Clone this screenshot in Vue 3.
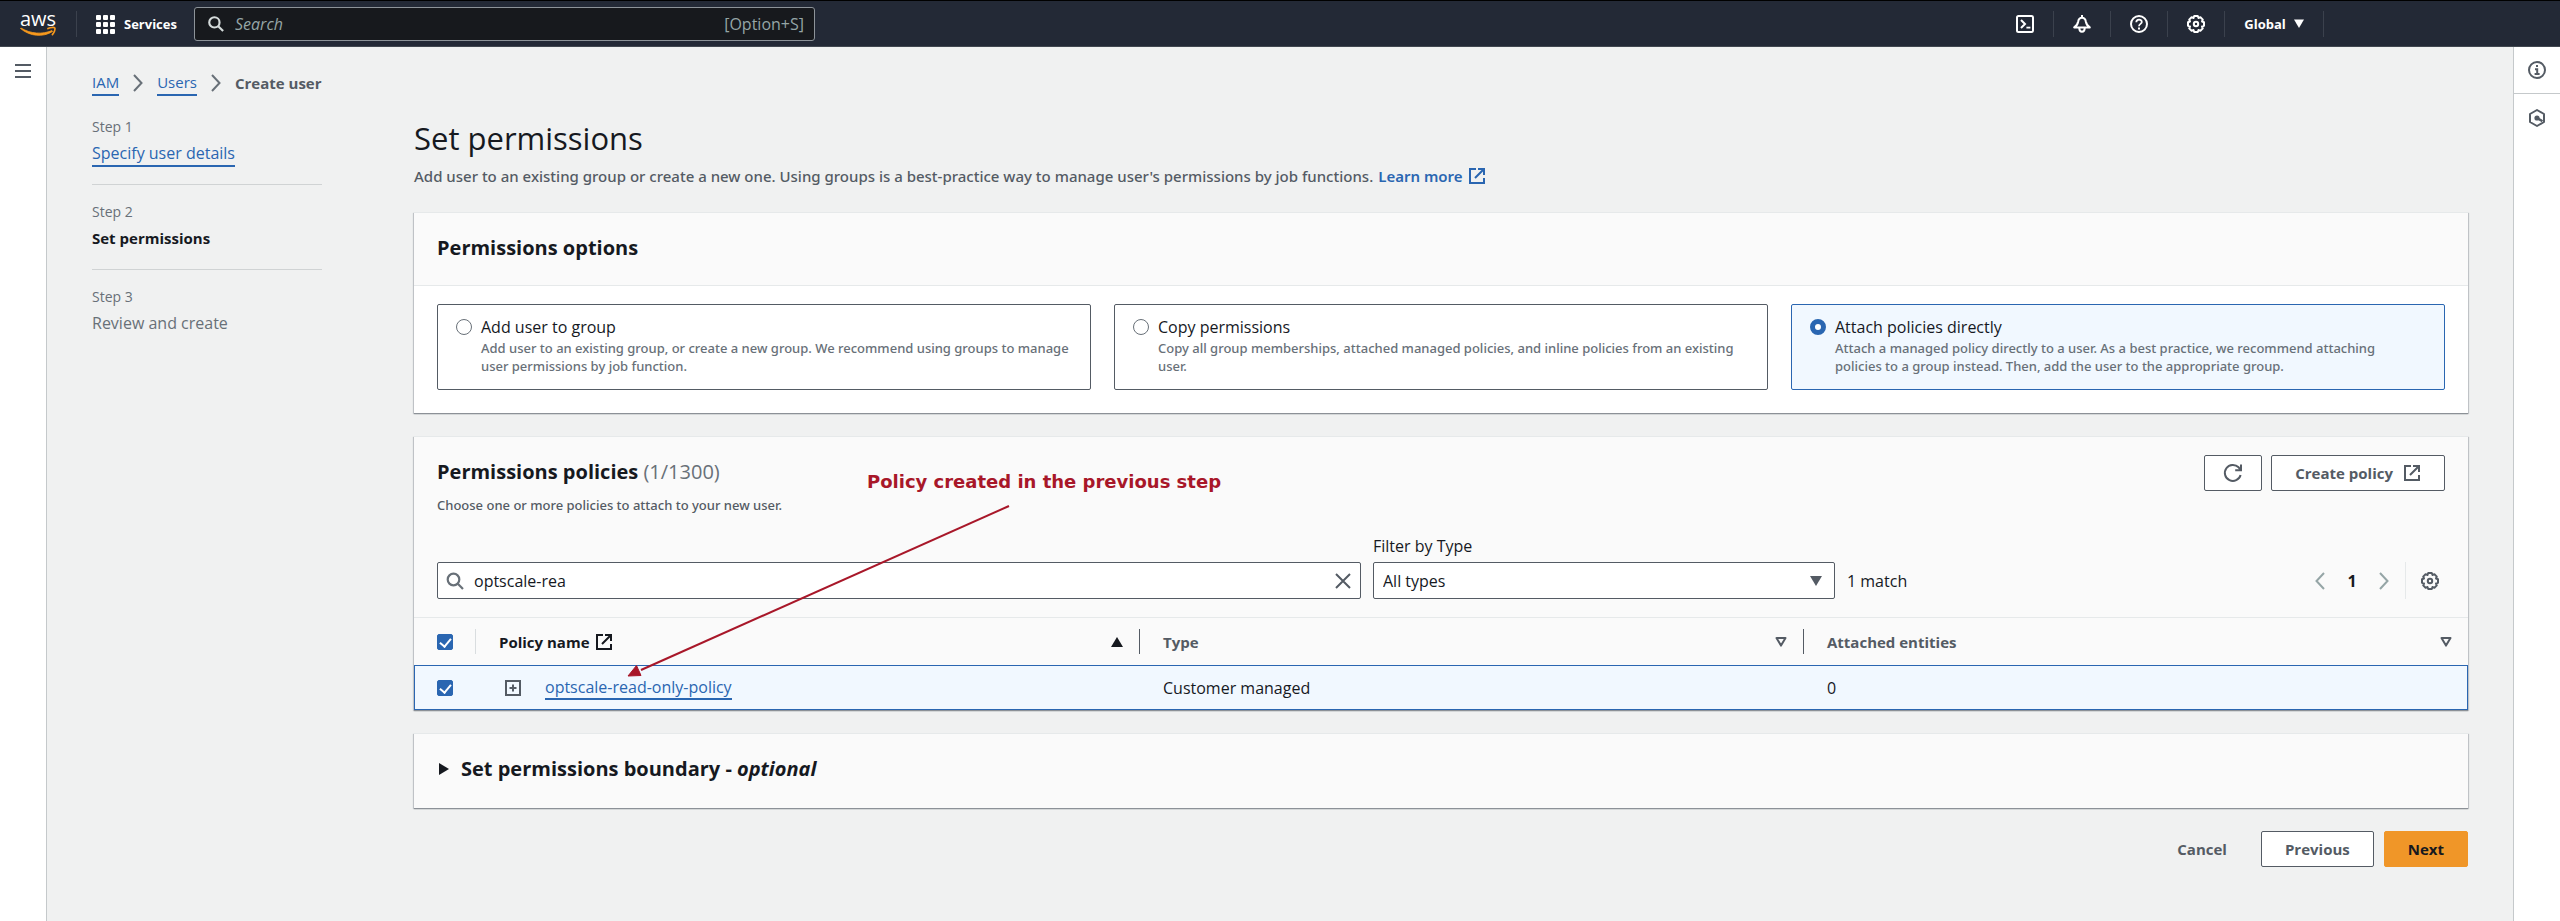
<script setup>
import { ref } from 'vue'

const search = ref('optscale-rea')
const filterType = ref('All types')
const selectedOption = ref('attach')
const allChecked = ref(true)
const rowChecked = ref(true)

const options = [
  {
    id: 'group',
    title: 'Add user to group',
    text: 'Add user to an existing group, or create a new group. We recommend using groups to manage user permissions by job function.',
  },
  {
    id: 'copy',
    title: 'Copy permissions',
    text: 'Copy all group memberships, attached managed policies, and inline policies from an existing user.',
  },
  {
    id: 'attach',
    title: 'Attach policies directly',
    text: 'Attach a managed policy directly to a user. As a best practice, we recommend attaching\npolicies to a group instead. Then, add the user to the appropriate group.',
  },
]
</script>

<template>
  <div class="app">
    <header class="topbar">
      <a class="logo" href="#" aria-label="AWS home">
        <span class="logo-word">aws</span>
        <svg class="smile" viewBox="0 0 36 11" aria-hidden="true">
          <path d="M0.5 2.5 C10 10.5 23 11.5 32.5 5.5 L32 4.6 C22 8.6 11 8 0.9 2 Z" fill="#f8991d" stroke="#f8991d" stroke-width="0.8" />
          <path d="M28 2.6 C31 1.2 34.2 1.2 34.8 2 C35.3 3.2 34.4 6.4 32.4 8.6" fill="none" stroke="#f8991d" stroke-width="1.7" stroke-linecap="round" />
        </svg>
      </a>
      <button class="services" type="button">
        <svg class="icon-20" viewBox="0 0 20 20" fill="#fff" aria-hidden="true">
          <rect x="1" y="1" width="5" height="5" rx="1" /><rect x="8" y="1" width="5" height="5" rx="1" /><rect x="15" y="1" width="5" height="5" rx="1" />
          <rect x="1" y="8" width="5" height="5" rx="1" /><rect x="8" y="8" width="5" height="5" rx="1" /><rect x="15" y="8" width="5" height="5" rx="1" />
          <rect x="1" y="15" width="5" height="5" rx="1" /><rect x="8" y="15" width="5" height="5" rx="1" /><rect x="15" y="15" width="5" height="5" rx="1" />
        </svg>
        <span>Services</span>
      </button>
      <div class="global-search">
        <svg class="icon-16" viewBox="0 0 18 18" fill="none" stroke="#d5dbdb" stroke-width="2.4" aria-hidden="true">
          <circle cx="7.2" cy="7.2" r="5.8" /><path d="M11.5 11.5 L17 17" />
        </svg>
        <input type="text" aria-label="Search" placeholder="Search" />
        <span class="shortcut">[Option+S]</span>
      </div>
      <nav class="utilities" aria-label="Utilities">
        <button type="button" aria-label="CloudShell">
          <svg class="icon-18" viewBox="0 0 18 18" fill="none" stroke="#fff" stroke-width="2" aria-hidden="true">
            <rect x="1" y="1" width="16" height="16" rx="1.5" /><path d="M5 5 L9 9 L5 13" /><path d="M10.4 12.6 H14.4" stroke-width="1.8" />
          </svg>
        </button>
        <button type="button" aria-label="Notifications">
          <svg class="icon-18" viewBox="0 0 18 18" fill="none" stroke="#fff" stroke-width="2" stroke-linejoin="round" aria-hidden="true">
            <path d="M9 0 V3 M1.2 12.4 H16.8 C14.4 11 13.4 9.5 12.8 6.5 C12.4 4 11.2 2.8 9 2.8 C6.8 2.8 5.6 4 5.2 6.5 C4.6 9.5 3.6 11 1.2 12.4 Z" /><path d="M6.3 13 C6.3 18 11.7 18 11.7 13" />
          </svg>
        </button>
        <button type="button" aria-label="Help">
          <svg class="icon-18" viewBox="0 0 18 18" fill="none" stroke="#fff" stroke-width="2" aria-hidden="true">
            <circle cx="9" cy="9" r="8" /><path d="M6.3 7.2 C6.3 3.8 11.8 3.8 11.8 7 C11.8 9 9 8.8 9 11.2" stroke-width="1.8" /><path d="M9 12.6 V14.6" />
          </svg>
        </button>
        <button type="button" aria-label="Settings">
          <svg class="icon-18" viewBox="0 0 18 18" fill="none" stroke="#fff" stroke-width="2" stroke-linejoin="round" aria-hidden="true">
            <path d="M7.2 1 H10.8 L11.5 3 L13.4 2.2 L15.8 4.6 L15 6.5 L17 7.2 V10.8 L15 11.5 L15.8 13.4 L13.4 15.8 L11.5 15 L10.8 17 H7.2 L6.5 15 L4.6 15.8 L2.2 13.4 L3 11.5 L1 10.8 V7.2 L3 6.5 L2.2 4.6 L4.6 2.2 L6.5 3 Z" /><circle cx="9" cy="9" r="2.2" />
          </svg>
        </button>
        <button class="region" type="button">
          <span>Global</span>
          <svg class="caret" viewBox="0 0 10 9" aria-hidden="true"><path d="M0 0.5 H10 L5 9 Z" fill="#fff" /></svg>
        </button>
      </nav>
    </header>

    <div class="body">
      <aside class="rail left">
        <button type="button" aria-label="Open navigation">
          <svg class="icon-18" viewBox="0 0 18 18" stroke="#545b64" stroke-width="2" aria-hidden="true"><path d="M1 3 H17 M1 9 H17 M1 15 H17" /></svg>
        </button>
      </aside>

      <main class="content">
        <nav class="crumbs" aria-label="Breadcrumb">
          <a href="#">IAM</a>
          <svg class="crumb-sep" viewBox="0 0 12 18" fill="none" stroke="#687078" stroke-width="2" aria-hidden="true"><path d="M2 1 L9.5 9 L2 17" /></svg>
          <a href="#">Users</a>
          <svg class="crumb-sep" viewBox="0 0 12 18" fill="none" stroke="#687078" stroke-width="2" aria-hidden="true"><path d="M2 1 L9.5 9 L2 17" /></svg>
          <span class="here">Create user</span>
        </nav>

        <div class="wizard">
          <ol class="steps">
            <li><small>Step 1</small><a href="#">Specify user details</a></li>
            <li><small>Step 2</small><strong>Set permissions</strong></li>
            <li><small>Step 3</small><span>Review and create</span></li>
          </ol>

          <div class="main-col">
            <h1>Set permissions</h1>
            <p class="lead">
              Add user to an existing group or create a new one. Using groups is a best-practice way to manage user's permissions by job functions.
              <a href="#">Learn more
                <svg class="icon-18" viewBox="0 0 18 18" fill="none" stroke="currentColor" stroke-width="2" aria-hidden="true"><path d="M8 2 H2 V16 H16 V11 M10 2 H16 V8 M16 2 L7 11" /></svg>
              </a>
            </p>

            <section class="card">
              <div class="card-head"><h2>Permissions options</h2></div>
              <div class="options">
                <label v-for="o in options" :key="o.id" class="option" :class="{ selected: selectedOption === o.id }">
                  <input v-model="selectedOption" type="radio" name="permission-option" :value="o.id" />
                  <span class="option-text">
                    <span class="option-title">{{ o.title }}</span>
                    <span class="option-desc">{{ o.text }}</span>
                  </span>
                </label>
              </div>
            </section>

            <section class="card policies">
              <div class="policies-head">
                <div>
                  <h2>Permissions policies <span class="count">(1/1300)</span></h2>
                  <p class="hint">Choose one or more policies to attach to your new user.</p>
                </div>
                <div class="actions">
                  <button class="btn icon-only" type="button" aria-label="Refresh">
                    <svg class="icon-20" viewBox="0 0 20 20" fill="none" stroke="#545b64" stroke-width="2" aria-hidden="true"><path d="M17.6 12 A8 8 0 1 1 15.6 4.3 L17.8 7" /><path d="M18 1.5 V7.2 H12.2" /></svg>
                  </button>
                  <button class="btn" type="button">
                    Create policy
                    <svg class="icon-18" viewBox="0 0 18 18" fill="none" stroke="currentColor" stroke-width="2" aria-hidden="true"><path d="M8 2 H2 V16 H16 V11 M10 2 H16 V8 M16 2 L7 11" /></svg>
                  </button>
                </div>
              </div>

              <div class="filters">
                <div class="search-box">
                  <svg class="icon-18" viewBox="0 0 18 18" fill="none" stroke="#687078" stroke-width="2.2" aria-hidden="true"><circle cx="7.5" cy="7.5" r="5.8" /><path d="M11.8 11.8 L17 17" /></svg>
                  <input v-model="search" type="text" aria-label="Search policies" />
                  <button type="button" aria-label="Clear search">
                    <svg class="icon-18" viewBox="0 0 18 18" stroke="#545b64" stroke-width="2" aria-hidden="true"><path d="M2 2 L16 16 M16 2 L2 16" /></svg>
                  </button>
                </div>
                <div class="type-filter">
                  <label for="type-filter">Filter by Type</label>
                  <div class="select-wrap">
                    <select id="type-filter" v-model="filterType"><option>All types</option></select>
                    <svg class="select-caret" viewBox="0 0 12 10" aria-hidden="true"><path d="M0 0 H12 L6 10 Z" fill="#545b64" /></svg>
                  </div>
                </div>
                <div class="results">
                  <span>1 match</span>
                  <div class="pager">
                    <button type="button" aria-label="Previous page">
                      <svg class="pager-icon" viewBox="0 0 12 18" fill="none" stroke="#95a5a6" stroke-width="2"><path d="M10 1 L2.5 9 L10 17" /></svg>
                    </button>
                    <button class="page" type="button">1</button>
                    <button type="button" aria-label="Next page">
                      <svg class="pager-icon" viewBox="0 0 12 18" fill="none" stroke="#95a5a6" stroke-width="2"><path d="M2 1 L9.5 9 L2 17" /></svg>
                    </button>
                    <button class="prefs" type="button" aria-label="Preferences">
                      <svg class="icon-18" viewBox="0 0 18 18" fill="none" stroke="#545b64" stroke-width="2" stroke-linejoin="round"><path d="M7.2 1 H10.8 L11.5 3 L13.4 2.2 L15.8 4.6 L15 6.5 L17 7.2 V10.8 L15 11.5 L15.8 13.4 L13.4 15.8 L11.5 15 L10.8 17 H7.2 L6.5 15 L4.6 15.8 L2.2 13.4 L3 11.5 L1 10.8 V7.2 L3 6.5 L2.2 4.6 L4.6 2.2 L6.5 3 Z" /><circle cx="9" cy="9" r="2.2" /></svg>
                    </button>
                  </div>
                </div>
              </div>

              <table>
                <colgroup><col class="col-check" /><col class="col-name" /><col class="col-type" /><col class="col-entities" /></colgroup>
                <thead>
                  <tr>
                    <th><div class="th light"><input v-model="allChecked" type="checkbox" aria-label="Select all policies" /></div></th>
                    <th>
                      <div class="th dark">
                        <span class="name-label">Policy name
                          <svg class="icon-18" viewBox="0 0 18 18" fill="none" stroke="currentColor" stroke-width="2" aria-hidden="true"><path d="M8 2 H2 V16 H16 V11 M10 2 H16 V8 M16 2 L7 11" /></svg>
                        </span>
                        <svg class="sort" viewBox="0 0 12 10" aria-hidden="true"><path d="M0 10 H12 L6 0 Z" fill="#16191f" /></svg>
                      </div>
                    </th>
                    <th>
                      <div class="th">
                        Type
                        <svg class="sort" viewBox="0 0 12 10" fill="none" stroke="#545b64" stroke-width="2" stroke-linejoin="round" aria-hidden="true"><path d="M1.5 1 H10.5 L6 8.6 Z" /></svg>
                      </div>
                    </th>
                    <th>
                      <div class="th last">
                        Attached entities
                        <svg class="sort" viewBox="0 0 12 10" fill="none" stroke="#545b64" stroke-width="2" stroke-linejoin="round" aria-hidden="true"><path d="M1.5 1 H10.5 L6 8.6 Z" /></svg>
                      </div>
                    </th>
                  </tr>
                </thead>
                <tbody>
                  <tr>
                    <td><div class="cell"><input v-model="rowChecked" type="checkbox" aria-label="Select optscale-read-only-policy" /></div></td>
                    <td>
                      <div class="cell name-cell">
                        <button type="button" aria-label="Expand policy">
                          <svg class="icon-18" viewBox="0 0 18 18" fill="none" stroke="#545b64" stroke-width="2"><rect x="2" y="2" width="14" height="14" /><path d="M9 5.5 V12.5 M5.5 9 H12.5" /></svg>
                        </button>
                        <a href="#">optscale-read-only-policy</a>
                      </div>
                    </td>
                    <td><div class="cell">Customer managed</div></td>
                    <td><div class="cell">0</div></td>
                  </tr>
                </tbody>
              </table>

              <div class="note">
                <p>Policy created in the previous step</p>
                <svg viewBox="0 0 384 174" aria-hidden="true">
                  <path d="M382 2 L14 166" stroke="#a81729" stroke-width="2" fill="none" />
                  <path d="M1 172 L9.5 161.5 L14 171.5 Z" fill="#a81729" stroke="#a81729" />
                </svg>
              </div>
            </section>

            <section class="card boundary">
              <button type="button" aria-expanded="false">
                <svg class="expand" viewBox="0 0 10 12" aria-hidden="true"><path d="M0 0 L10 6 L0 12 Z" fill="#16191f" /></svg>
                <span>Set permissions boundary - <em>optional</em></span>
              </button>
            </section>

            <div class="footer-actions">
              <button class="btn plain" type="button">Cancel</button>
              <button class="btn" type="button">Previous</button>
              <button class="btn primary" type="button">Next</button>
            </div>
          </div>
        </div>
      </main>

      <aside class="rail right">
        <button type="button" aria-label="Info">
          <svg class="icon-18" viewBox="0 0 18 18" fill="none" stroke="#545b64" stroke-width="2"><circle cx="9" cy="9" r="8" /><path d="M9 4 V6 M7 8.3 H9.2 V13 M6.6 13 H11.6" /></svg>
        </button>
        <button type="button" aria-label="Tutorials">
          <svg class="icon-18" viewBox="0 0 18 18" fill="none" stroke="#545b64" stroke-width="2" stroke-linejoin="round"><path d="M9 1 L16 5 V13 L9 17 L2 13 V5 Z" /><path d="M9 9 L14.5 12.2" stroke-width="2.4" /><circle cx="9" cy="9" r="1.6" fill="#545b64" /></svg>
        </button>
      </aside>
    </div>
  </div>
</template>

<style>
body {
  margin: 0;
  background: #f0f1f1;
}
</style>

<style scoped>
.app,
.app * {
  box-sizing: border-box;
}
.app {
  display: flex;
  flex-direction: column;
  min-height: 100vh;
  font-family: "Open Sans", "Noto Sans", sans-serif;
  font-size: 16px;
  line-height: 24px;
  color: #16191f;
}
button,
input,
select {
  font: inherit;
  color: inherit;
}
button {
  padding: 0;
  border: 0;
  background: none;
}
svg {
  display: block;
  flex: none;
}
h1,
h2,
p,
ol {
  margin: 0;
  padding: 0;
}
.icon-16 {
  width: 16px;
  height: 16px;
}
.icon-18 {
  width: 18px;
  height: 18px;
}
.icon-20 {
  width: 20px;
  height: 20px;
}
a {
  color: #2a66b1;
  text-decoration: none;
}

/* top bar */
.topbar {
  display: flex;
  align-items: center;
  height: 47px;
  border-top: 1px solid #000;
  border-bottom: 1px solid #414750;
  background: #232936;
  color: #fff;
}
.logo {
  display: flex;
  flex-direction: column;
  align-items: center;
  width: 77px;
  border-right: 1px solid #3b414d;
  color: #fff;
}
.logo-word {
  font-size: 20px;
  line-height: 15px;
}
.smile {
  width: 36px;
  height: 11px;
}
.services {
  display: flex;
  align-items: center;
  gap: 9px;
  width: 117px;
  padding-left: 18px;
  font-size: 13px;
  font-weight: 700;
}
.global-search {
  display: flex;
  align-items: center;
  gap: 11px;
  width: 621px;
  height: 34px;
  padding: 0 10px 0 13px;
  border: 1px solid #8d9399;
  border-radius: 3px;
  background: #17191d;
}
.global-search input {
  flex: 1;
  min-width: 0;
  padding: 0;
  border: 0;
  background: none;
  outline: 0;
}
.global-search input::placeholder {
  color: #95a5a6;
  font-style: italic;
  opacity: 1;
}
.shortcut {
  color: #95a5a6;
}
.utilities {
  display: flex;
  margin-left: auto;
  margin-right: 236px;
}
.utilities button {
  display: flex;
  align-items: center;
  justify-content: center;
  width: 57px;
  height: 26px;
  border-right: 1px solid #3b414d;
}
.utilities .region {
  gap: 8px;
  width: 99px;
  font-size: 13px;
  font-weight: 700;
}
.caret {
  width: 10px;
  height: 9px;
}

/* side rails */
.body {
  display: flex;
  flex: 1;
}
.rail {
  flex: none;
  width: 47px;
  background: #fff;
}
.rail button {
  display: flex;
  align-items: center;
  justify-content: center;
  width: 100%;
  height: 47px;
}
.left {
  border-right: 1px solid #c5c9cb;
}
.right {
  border-left: 1px solid #c5c9cb;
}
.right button:first-child {
  border-bottom: 1px solid #c5c9cb;
}

/* page */
.content {
  flex: 1;
  min-width: 0;
  padding: 23px 45px 53px;
}
.crumbs {
  display: flex;
  align-items: center;
  gap: 13px;
  font-size: 15px;
}
.crumbs a,
.steps a,
.name-cell a {
  border-bottom: 2px solid #2a66b1;
}
.crumb-sep,
.pager-icon {
  width: 12px;
  height: 18px;
}
.here {
  color: #545b64;
  font-weight: 700;
}
.wizard {
  display: grid;
  grid-template-columns: 230px 1fr;
  gap: 92px;
  margin-top: 16px;
}
.steps {
  list-style: none;
}
.steps li {
  display: flex;
  flex-direction: column;
  align-items: flex-start;
  gap: 3px;
  height: 85px;
  color: #687078;
}
.steps li + li {
  border-top: 1px solid #d0d3d4;
  padding-top: 16px;
}
.steps li:first-child {
  height: 72px;
  padding-top: 4px;
}
.steps small {
  font-size: 14px;
  line-height: 22px;
}
.steps strong {
  color: #16191f;
  font-size: 15px;
}
h1 {
  padding-top: 4px;
  font-size: 31px;
  font-weight: 400;
  line-height: 44px;
}
.lead {
  display: flex;
  align-items: center;
  gap: 5px;
  margin: 4px 0 24px;
  color: #545b64;
  font-family: "Noto Sans", "Open Sans", sans-serif;
  font-size: 15px;
  font-weight: 500;
}
.lead a {
  display: flex;
  align-items: center;
  gap: 5px;
  font-weight: 600;
}

/* cards */
.card {
  position: relative;
  margin-top: 23px;
  background: #fff;
  border-top: 1px solid #e6e9ea;
  box-shadow: 0 1px 1px 0 #8c9197, 1px 1px 1px 0 #c9cdd0, -1px 1px 1px 0 #c9cdd0;
}
.card-head {
  padding: 21px 23px 23px;
  border-bottom: 1px solid #e6e9ea;
  background: #fafafa;
}
h2 {
  font-size: 20px;
  font-weight: 700;
  line-height: 28px;
}
.options {
  display: grid;
  grid-template-columns: repeat(3, 1fr);
  gap: 23px;
  padding: 18px 23px 23px;
}
.option {
  display: flex;
  gap: 9px;
  min-height: 86px;
  padding: 10px 18px;
  border: 1px solid #545b64;
  border-radius: 2px;
}
.option.selected {
  border-color: #2a66b1;
  background: #f1f8ff;
}
input[type="radio"] {
  flex: none;
  appearance: none;
  width: 16px;
  height: 16px;
  margin: 4px 0 0;
  border: 1px solid #687078;
  border-radius: 50%;
  background: #fff;
}
input[type="radio"]:checked {
  border: 5px solid #2a66b1;
}
.option-text {
  display: flex;
  flex-direction: column;
}
.option-desc,
.hint {
  font-family: "Noto Sans", "Open Sans", sans-serif;
  font-size: 13px;
  font-weight: 500;
}
.option-desc {
  color: #687078;
  line-height: 18px;
  white-space: pre-line;
}

/* policies */
.policies {
  background: #fafafa;
}
.policies-head {
  display: flex;
  justify-content: space-between;
  padding: 18px 23px 0;
}
.policies-head h2 {
  padding-top: 3px;
}
.count {
  color: #687078;
  font-weight: 400;
}
.hint {
  margin-top: 8px;
  color: #545b64;
  line-height: 22px;
}
.actions {
  display: flex;
  gap: 9px;
}
.btn {
  display: flex;
  align-items: center;
  gap: 10px;
  height: 36px;
  padding: 0 23px;
  border: 1px solid #545b64;
  border-radius: 2px;
  background: #fff;
  color: #545b64;
  font-size: 15px;
  font-weight: 700;
}
.icon-only {
  padding: 0 18px;
}
.filters {
  display: grid;
  grid-template-columns: 2fr 1fr 598px;
  column-gap: 12px;
  align-items: end;
  padding: 18px 23px;
}
.search-box {
  display: flex;
  align-items: center;
  gap: 10px;
  height: 37px;
  padding: 0 8px;
  border: 1px solid #545b64;
  border-radius: 2px;
  background: #fff;
}
.search-box input {
  flex: 1;
  min-width: 0;
  padding: 0;
  border: 0;
  background: none;
  outline: 0;
}
.type-filter label {
  display: block;
  margin-bottom: 4px;
}
.select-wrap {
  display: grid;
  align-items: center;
}
.select-wrap > * {
  grid-area: 1 / 1;
}
.type-filter select {
  appearance: none;
  width: 100%;
  height: 37px;
  padding: 0 9px;
  border: 1px solid #545b64;
  border-radius: 2px;
  background: #fff;
}
.select-caret {
  justify-self: end;
  width: 12px;
  height: 10px;
  margin-right: 13px;
  pointer-events: none;
}
.results {
  display: flex;
  align-items: center;
  justify-content: space-between;
  height: 37px;
}
.pager {
  display: flex;
  align-items: center;
}
.pager .page {
  width: 52px;
  font-weight: 700;
}
.pager .prefs {
  display: flex;
  align-items: center;
  justify-content: flex-end;
  width: 40px;
  height: 37px;
  margin-left: 15px;
  padding-right: 6px;
  border-left: 1px solid #e6e9ea;
}
table {
  width: 100%;
  border-spacing: 0;
  table-layout: fixed;
}
.col-check {
  width: 62px;
}
.col-name,
.col-type {
  width: 664px;
}
th,
td {
  padding: 0;
  text-align: left;
}
th {
  height: 48px;
  border-top: 1px solid #e6e9ea;
  font-size: 15px;
}
.th {
  display: flex;
  align-items: center;
  justify-content: space-between;
  height: 25px;
  padding: 0 16px 0 23px;
  border-right: 1px solid #545b64;
  color: #545b64;
}
.th.light {
  border-color: #d9dddf;
}
.th.dark {
  color: #16191f;
}
.th.last {
  border: 0;
}
.name-label {
  display: flex;
  align-items: center;
  gap: 5px;
}
.sort {
  width: 12px;
  height: 10px;
}
td {
  height: 45px;
  border: solid #2a66b1;
  border-width: 1px 0;
  background: #f1f8ff;
}
td:first-child {
  border-left-width: 1px;
}
td:last-child {
  border-right-width: 1px;
}
.cell {
  display: flex;
  align-items: center;
  padding-left: 23px;
}
td:first-child .cell {
  padding-left: 22px;
}
.name-cell {
  gap: 23px;
  padding-left: 28px;
}
.name-cell a {
  line-height: 22px;
}
input[type="checkbox"] {
  appearance: none;
  flex: none;
  width: 16px;
  height: 16px;
  margin: 0;
  border: 1px solid #687078;
  border-radius: 2px;
  background: #fff;
}
input[type="checkbox"]:checked {
  border-color: #2a66b1;
  background: #2a66b1;
}
input[type="checkbox"]:checked::before {
  content: "";
  display: block;
  width: 5px;
  height: 9px;
  margin: 1px 0 0 4px;
  border: solid #fff;
  border-width: 0 2px 2px 0;
  transform: rotate(40deg);
}

/* callout drawn over the table */
.note {
  position: absolute;
  top: 33px;
  left: 213px;
  color: #a81729;
  pointer-events: none;
}
.note p {
  padding-left: 240px;
  font-family: "DejaVu Sans", sans-serif;
  font-size: 18px;
  font-weight: 700;
}
.note svg {
  width: 384px;
  height: 174px;
  margin-top: 10px;
}

.boundary {
  background: #fafafa;
}
.boundary button {
  display: flex;
  align-items: center;
  gap: 12px;
  width: 100%;
  padding: 21px 25px 25px;
  font-size: 20px;
  font-weight: 700;
  line-height: 28px;
}
.expand {
  width: 10px;
  height: 12px;
}
.footer-actions {
  display: flex;
  justify-content: flex-end;
  gap: 10px;
  margin-top: 23px;
}
.plain {
  border-color: transparent;
  background: none;
}
.primary {
  border-color: #f09628;
  background: #f09628;
  color: #16191f;
}
</style>
